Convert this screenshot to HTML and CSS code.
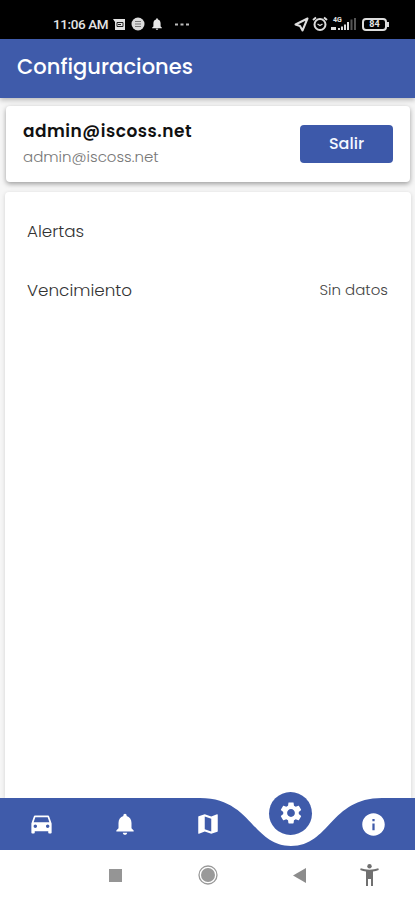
FILE: index.html
```html
<!DOCTYPE html>
<html lang="es">

<head>
    <meta charset="UTF-8">
    <meta name="viewport" content="width=device-width, initial-scale=1.0">
    <title>Configuraciones</title>
    <link rel="stylesheet" href="styles.css">
</head>

<body>
    <div class="screen">
        <div class="status-bar">
            <div class="status-left">
                <span class="clock">11:06 AM</span>
                <svg class="status-msg" width="12" height="11" viewBox="0 0 12 11">
                    <path d="M0 0h12v11H2V3z" fill="#e4e4e4" />
                    <path d="M4 3.500h6V7.500H4z" fill="none" stroke="#222" stroke-width="1" />
                    <path d="M5 5.500h3" stroke="#222" stroke-width="1" />
                </svg>
                <svg class="status-disc" width="14" height="14" viewBox="0 0 14 14">
                    <circle cx="7" cy="7" r="6.500" fill="#dcdcdc" />
                    <path d="M4 4.500h6M4 7h6M4 9.500h6" stroke="#777" stroke-width="1" />
                </svg>
                <svg class="status-bell" width="10" height="12" viewBox="4 2 16 20">
                    <path d="M12 22c1.100 0 2-.9 2-2h-4c0 1.100.9 2 2 2zm6-6v-5c0-3.070-1.640-5.640-4.500-6.320V4c0-.83-.67-1.500-1.500-1.500s-1.500.67-1.500 1.500v.68C7.630 5.360 6 7.920 6 11v5l-2 2v1h16v-1l-2-2z" fill="#e8e8e8" />
                </svg>
                <svg class="status-more" width="14" height="3" viewBox="0 0 14 3">
                    <path d="M0 1.500h3M5.500 1.500h3M11 1.500h3" stroke="#bbb" stroke-width="1.800" />
                </svg>
            </div>
            <div class="status-right">
                <svg width="15" height="15" viewBox="0 0 15 15">
                    <path d="M13.500 1.500L1.500 7.500l4.500 1.500 2.500 4.500z" fill="none" stroke="#ddd" stroke-width="2" stroke-linejoin="round" />
                </svg>
                <svg width="16" height="16" viewBox="0 0 16 16" fill="none" stroke="#ddd">
                    <circle cx="8" cy="8.500" r="5.500" stroke-width="2" />
                    <path d="M1 4l3-2.500M15 4l-3-2.500" stroke-width="2" />
                    <path d="M5.500 8L8 9.500 10.500 8" stroke-width="1.300" />
                </svg>
                <div class="signal">
                    <span class="signal-type">4G</span>
                    <svg width="26" height="14" viewBox="0 0 26 14">
                        <path d="M0 10h5v3H0zM7 11h2v2H7zM10 9.500h2V13h-2zM13 7.500h2V13h-2zM16 5h2v8h-2z" fill="#ddd" />
                        <path d="M19.500 2.500h2V13h-2zM23 1h2v12h-2z" fill="#555" />
                    </svg>
                </div>
                <div class="battery"><span>84</span></div>
            </div>
        </div>

        <header class="app-bar">
            <h1>Configuraciones</h1>
        </header>

        <main>
            <section class="card account">
                <div class="account-info">
                    <p class="account-name">admin@iscoss.net</p>
                    <p class="account-email">admin@iscoss.net</p>
                </div>
                <button class="logout-button">Salir</button>
            </section>

            <section class="card settings">
                <div class="row">
                    <span>Alertas</span>
                </div>
                <div class="row">
                    <span>Vencimiento</span>
                    <span class="value">Sin datos</span>
                </div>
            </section>
        </main>

        <nav class="tab-bar">
            <svg class="tab-shape" width="415" height="52" viewBox="0 0 415 52">
                <path d="M0 0H200C252 0 252 48 291 48S330 0 382 0H415V52H0z" fill="#3f5baa" />
            </svg>
            <a class="tab">
                <svg width="27" height="27" viewBox="0 0 24 24">
                    <path d="M18.920 5.010C18.720 4.420 18.160 4 17.500 4h-11c-.66 0-1.210.42-1.420 1.010L3 11v8c0 .55.45 1 1 1h1c.55 0 1-.45 1-1v-1h12v1c0 .55.45 1 1 1h1c.55 0 1-.45 1-1v-8l-2.080-5.990zM6.500 15c-.83 0-1.500-.67-1.500-1.500S5.670 12 6.500 12s1.500.67 1.500 1.500S7.330 15 6.500 15zm11 0c-.83 0-1.500-.67-1.500-1.500s.67-1.500 1.500-1.500 1.500.67 1.500 1.500-.67 1.500-1.500 1.500zM5 10l1.500-4.500h11L19 10H5z" />
                </svg>
            </a>
            <a class="tab">
                <svg width="26" height="26" viewBox="0 0 24 24">
                    <path d="M12 22c1.100 0 2-.9 2-2h-4c0 1.100.89 2 2 2zm6-6v-5c0-3.070-1.640-5.640-4.500-6.320V4c0-.83-.67-1.500-1.500-1.500s-1.500.67-1.500 1.500v.68C7.630 5.360 6 7.920 6 11v5l-2 2v1h16v-1l-2-2z" />
                </svg>
            </a>
            <a class="tab">
                <svg width="26" height="26" viewBox="0 0 24 24">
                    <path d="M20.500 3l-.16.03L15 5.100 9 3 3.360 4.900c-.21.07-.36.25-.36.48V20.500c0 .28.22.5.5.5l.16-.03L9 18.900l6 2.100 5.640-1.900c.21-.07.36-.25.36-.48V3.500c0-.28-.22-.5-.5-.5zM15 19l-6-2.110V5l6 2.110V19z" />
                </svg>
            </a>
            <a class="tab active">
                <span class="tab-bubble">
                    <svg width="26" height="26" viewBox="0 0 24 24">
                        <path d="M19.140 12.940c.04-.3.06-.61.06-.94 0-.32-.02-.64-.07-.94l2.030-1.580c.18-.14.23-.41.12-.61l-1.920-3.320c-.12-.22-.37-.29-.59-.22l-2.390.96c-.5-.38-1.030-.7-1.620-.94l-.36-2.540c-.04-.24-.24-.41-.48-.41h-3.840c-.24 0-.43.17-.47.41l-.36 2.540c-.59.24-1.130.57-1.620.94l-2.390-.96c-.22-.08-.47 0-.59.22L2.740 8.870c-.12.21-.08.47.12.61l2.030 1.580c-.05.3-.09.63-.09.94s.02.64.07.94l-2.030 1.580c-.18.14-.23.41-.12.61l1.920 3.320c.12.22.37.29.59.22l2.390-.96c.5.38 1.030.7 1.620.94l.36 2.540c.05.24.24.41.48.41h3.840c.24 0 .44-.17.47-.41l.36-2.540c.59-.24 1.130-.56 1.620-.94l2.390.96c.22.08.47 0 .59-.22l1.920-3.320c.12-.22.07-.47-.12-.61l-2.010-1.580zM12 15.600c-1.980 0-3.600-1.620-3.600-3.600s1.620-3.600 3.600-3.600 3.600 1.620 3.600 3.600-1.620 3.600-3.600 3.600z" />
                    </svg>
                </span>
            </a>
            <a class="tab">
                <svg width="27" height="27" viewBox="0 0 24 24">
                    <path d="M12 2C6.480 2 2 6.480 2 12s4.480 10 10 10 10-4.480 10-10S17.520 2 12 2zm1 15h-2v-6h2v6zm0-8h-2V7h2v2z" />
                </svg>
            </a>
        </nav>

        <div class="system-nav">
            <svg width="13" height="13" viewBox="0 0 13 13">
                <path d="M0 0h13v13H0z" fill="#959595" />
            </svg>
            <svg width="20" height="20" viewBox="0 0 20 20">
                <circle cx="10" cy="10" r="9" fill="none" stroke="#999" stroke-width="1.300" />
                <circle cx="10" cy="10" r="7" fill="#999" />
            </svg>
            <svg width="13" height="15" viewBox="0 0 13 15">
                <path d="M0 7.500L13 0v15z" fill="#8c8c8c" />
            </svg>
            <svg width="19" height="22" viewBox="0 0 19 22">
                <circle cx="9.500" cy="2.200" r="2.200" fill="#707070" />
                <path d="M.7 4.300C6 6.200 13 6.200 18.300 4.300l.5 1.700c-2 .7-4 1.200-5.800 1.400V22h-2v-7H8v7H6V7.400C4.200 7.200 2.200 6.700.2 6z" fill="#707070" />
            </svg>
        </div>
    </div>
</body>

</html>
```
FILE: styles.css
```css
* {
    box-sizing: border-box;
    margin: 0;
    padding: 0;
}

body {
    font-family: Poppins, Inter, sans-serif;
    background-color: #fff;
    color: #333;
}

svg {
    display: block;
    flex-shrink: 0;
}

.screen {
    width: 415px;
    height: 900px;
    display: flex;
    flex-direction: column;
    overflow: hidden;
}

/* phone status bar */
.status-bar {
    height: 39px;
    padding: 10px 26px 0 53px;
    display: flex;
    justify-content: space-between;
    background-color: #000;
    color: #e4e4e4;
}

.status-left,
.status-right {
    height: 29px;
    display: flex;
    align-items: center;
    padding-bottom: 1px;
}

.clock {
    width: 60px;
    font-family: Roboto, sans-serif;
    font-size: 13.5px;
    font-weight: 500;
    letter-spacing: -0.4px;
    white-space: nowrap;
}

.status-disc {
    margin-left: 6px;
}

.status-bell {
    margin-left: 7px;
}

.status-more {
    margin-left: 13px;
}

.status-right {
    gap: 3px;
}

.signal {
    position: relative;
}

.signal-type {
    position: absolute;
    top: -1px;
    left: 2px;
    font-family: Roboto, sans-serif;
    font-size: 7px;
    font-weight: 700;
    line-height: 8px;
}

.battery {
    position: relative;
    width: 25px;
    height: 13px;
    margin-left: 2px;
    margin-right: 2px;
    border: 2px solid #ddd;
    border-radius: 4px;
    display: flex;
    align-items: center;
    justify-content: center;
    font-family: Roboto, sans-serif;
    font-size: 9px;
    font-weight: 700;
}

.battery::after {
    content: "";
    position: absolute;
    right: -4px;
    top: 2px;
    width: 2px;
    height: 5px;
    background-color: #ddd;
}

.app-bar {
    position: relative;
    height: 59px;
    padding: 0 17px;
    display: flex;
    align-items: center;
    background-color: #3f5baa;
    box-shadow: 0 2px 5px rgba(0, 0, 0, 0.25);
}

h1 {
    font-size: 21px;
    font-weight: 500;
    line-height: 55px;
    padding-bottom: 4px;
    letter-spacing: 0.05px;
    color: #fff;
}

main {
    flex: 1;
    padding: 8px 4px 0 5px;
    display: flex;
    flex-direction: column;
    gap: 10px;
    background-color: #f6f6f6;
    overflow: hidden;
}

.card {
    background-color: #fff;
    border-radius: 4px;
    box-shadow: 0 2px 5px rgba(0, 0, 0, 0.36);
}

.account {
    height: 76px;
    margin: 0 1px;
    padding: 0 17px;
    display: flex;
    align-items: center;
    justify-content: space-between;
}

.account-name {
    font-size: 17px;
    font-weight: 600;
    line-height: 26px;
    letter-spacing: 0.5px;
    color: #111;
}

.account-email {
    font-size: 15px;
    font-weight: 300;
    line-height: 26px;
    color: #777;
}

.logout-button {
    width: 93px;
    height: 38px;
    padding-bottom: 1px;
    border: none;
    border-radius: 4px;
    background-color: #3d59aa;
    color: #f4f7ff;
    font-family: inherit;
    font-size: 16px;
    font-weight: 500;
}

.settings {
    flex: 1;
    padding: 9px 23px 0 22px;
    border-radius: 4px 4px 0 0;
    box-shadow: 0 1px 4px rgba(0, 0, 0, 0.15);
}

.row {
    height: 59px;
    display: flex;
    align-items: center;
    justify-content: space-between;
    font-size: 16.8px;
    font-weight: 300;
}

.value {
    font-size: 15px;
    color: #444;
}

/* bottom tabs */
.tab-bar {
    position: relative;
    height: 52px;
    display: flex;
    background-color: #fff;
}

.tab-shape {
    position: absolute;
    top: 0;
    left: 0;
}

.tab {
    position: relative;
    flex: 1;
    display: flex;
    align-items: center;
    justify-content: center;
    fill: #fff;
}

.tab-bubble {
    width: 43px;
    height: 43px;
    margin-top: -22px;
    border-radius: 50%;
    display: flex;
    align-items: center;
    justify-content: center;
    background-color: #3f5baa;
}

.system-nav {
    height: 50px;
    padding-left: 70px;
    display: grid;
    grid-template-columns: 91px 94px 88px 52px;
    align-items: center;
    justify-items: center;
    background-color: #fff;
}
```
